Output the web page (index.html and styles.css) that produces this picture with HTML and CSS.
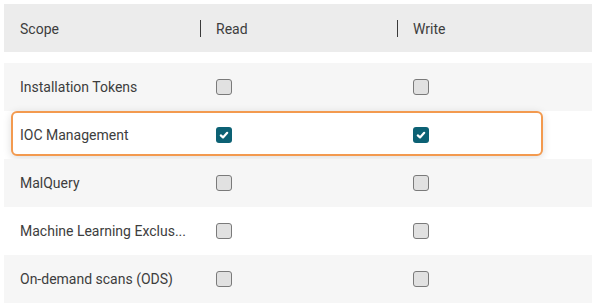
FILE: index.html
```html
<!DOCTYPE html>
<html>
<head>
<meta charset="utf-8">
<link rel="stylesheet" href="styles.css">
</head>
<body>
<div class="table">
  <div class="head">
    <div class="cell c1">Scope</div>
    <div class="cell c2 sep">Read</div>
    <div class="cell c3 sep">Write</div>
  </div>
  <div class="body">
    <div class="row alt">
      <div class="cell c1">Installation Tokens</div>
      <div class="cell c2"><span class="cb"></span></div>
      <div class="cell c3"><span class="cb"></span></div>
    </div>
    <div class="row hl">
      <div class="cell c1">IOC Management</div>
      <div class="cell c2"><span class="cb on"><svg viewBox="0 0 16 16" width="16" height="16"><path d="M4.8 8.4 L7 10.4 L11.2 5.8" fill="none" stroke="#fff" stroke-width="2.2" stroke-linecap="round" stroke-linejoin="round"/></svg></span></div>
      <div class="cell c3"><span class="cb on"><svg viewBox="0 0 16 16" width="16" height="16"><path d="M4.8 8.4 L7 10.4 L11.2 5.8" fill="none" stroke="#fff" stroke-width="2.2" stroke-linecap="round" stroke-linejoin="round"/></svg></span></div>
    </div>
    <div class="row alt">
      <div class="cell c1">MalQuery</div>
      <div class="cell c2"><span class="cb"></span></div>
      <div class="cell c3"><span class="cb"></span></div>
    </div>
    <div class="row">
      <div class="cell c1"><span class="trunc">Machine Learning Exclus...</span></div>
      <div class="cell c2"><span class="cb"></span></div>
      <div class="cell c3"><span class="cb"></span></div>
    </div>
    <div class="row alt">
      <div class="cell c1">On-demand scans (ODS)</div>
      <div class="cell c2"><span class="cb"></span></div>
      <div class="cell c3"><span class="cb"></span></div>
    </div>
  </div>
</div>
</body>
</html>
```
FILE: styles.css
```css
html, body {
  margin: 0;
  padding: 0;
  background: #fff;
}
body {
  font-family: Roboto, "Liberation Sans", sans-serif;
  font-size: 14px;
  color: #3d3d3d;
}
.table {
  padding: 4px 2px 0 4px;
}
.head {
  display: flex;
  height: 48px;
  background: #ececec;
}
.body {
  margin-top: 11px;
}
.row {
  display: flex;
  height: 48px;
  background: #fff;
  position: relative;
}
.row.alt {
  background: #f6f6f6;
}
.cell {
  display: flex;
  align-items: center;
  box-sizing: border-box;
  padding-left: 16px;
  position: relative;
}
.c1 { width: 196px; }
.c2 { width: 197px; }
.c3 { flex: 1; }
.sep::before {
  content: "";
  position: absolute;
  left: 0;
  top: 16px;
  height: 17px;
  width: 1px;
  background: #3a3a3a;
}
.head .cell { padding-top: 1px; }
.trunc {
  display: block;
  white-space: nowrap;
}
.cb {
  display: block;
  width: 16px;
  height: 16px;
  box-sizing: border-box;
  border: 1.5px solid #7a7a7a;
  border-radius: 3px;
  background: #e1e1e1;
}
.cb.on {
  border: none;
  background: #0c6174;
}
.cb svg { display: block; }
.row.hl .cell { z-index: 2; }
.row.hl::after {
  content: "";
  position: absolute;
  left: 7px;
  top: 0;
  width: 532px;
  height: 45px;
  box-sizing: border-box;
  border: 2px solid #f39a4f;
  border-radius: 6px;
  background: #fff;
  box-shadow: 0 2px 8px rgba(0,0,0,0.14);
}
```
